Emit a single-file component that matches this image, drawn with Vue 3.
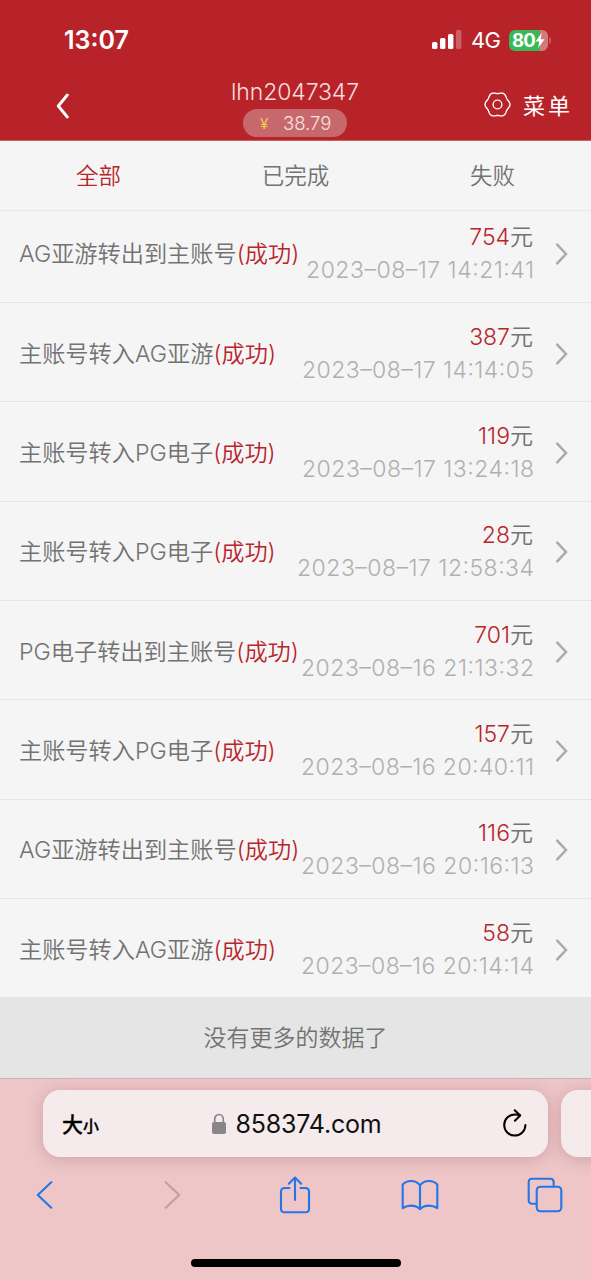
<script setup>
const rows = [
  { label: 'AG亚游转出到主账号', amount: '754', date: '2023–08–17', time: '14:21:41', w: 226 },
  { label: '主账号转入AG亚游', amount: '387', date: '2023–08–17', time: '14:14:05', w: 230 },
  { label: '主账号转入PG电子', amount: '119', date: '2023–08–17', time: '13:24:18', w: 230 },
  { label: '主账号转入PG电子', amount: '28', date: '2023–08–17', time: '12:58:34', w: 235 },
  { label: 'PG电子转出到主账号', amount: '701', date: '2023–08–16', time: '21:13:32', w: 231 },
  { label: '主账号转入PG电子', amount: '157', date: '2023–08–16', time: '20:40:11', w: 231 },
  { label: 'AG亚游转出到主账号', amount: '116', date: '2023–08–16', time: '20:16:13', w: 231 },
  { label: '主账号转入AG亚游', amount: '58', date: '2023–08–16', time: '20:14:14', w: 231 },
]

// Six-lobed outline of the settings icon.
const gear = Array.from({ length: 120 }, (_, i) => {
  const a = (i / 120) * Math.PI * 2
  const r = 11.7 + 0.75 * Math.cos(6 * a)
  return `${(13.5 + r * Math.cos(a)).toFixed(2)},${(13.5 + r * Math.sin(a)).toFixed(2)}`
}).join(' ')
</script>

<template>
  <div class="screen">
    <header class="top">
      <div class="status">
        <span class="clock">13:07</span>
        <div class="status-right">
          <svg class="signal" width="30" height="20" viewBox="0 0 30 20">
            <rect x="0" y="12" width="5.4" height="7" rx="1.5" fill="#fff" />
            <rect x="8" y="8" width="5.4" height="11" rx="1.5" fill="#fff" />
            <rect x="16" y="4" width="5.4" height="15" rx="1.5" fill="#fff" />
            <rect x="24" y="0" width="5.4" height="19" rx="1.5" fill="#fff" opacity=".28" />
          </svg>
          <span class="net">4G</span>
          <div class="battery">
            <span class="pct">80</span>
            <svg class="bolt" width="10" height="15" viewBox="0 0 9 15"><path d="M6.2 0 0 8.4h3.8L2.6 15 9 6.3H5.1Z" fill="#fff" /></svg>
          </div>
          <i class="nub"></i>
        </div>
      </div>
      <div class="nav">
        <div class="side">
          <svg width="14" height="26" viewBox="0 0 14 26"><path d="M11.3 2 2.3 13l9 11" fill="none" stroke="#fff" stroke-width="2.9" stroke-linecap="round" stroke-linejoin="round" /></svg>
        </div>
        <div class="account">
          <div class="user">lhn2047347</div>
          <div class="pill"><span class="yen">¥</span><span>38.79</span></div>
        </div>
        <div class="side menu">
          <svg width="27" height="27" viewBox="0 0 27 27" fill="none" stroke="#fff" stroke-width="1.35" stroke-linejoin="round">
            <polygon :points="gear" />
            <circle cx="13.5" cy="13.5" r="4.4" />
          </svg>
          <span>菜单</span>
        </div>
      </div>
    </header>

    <nav class="tabs">
      <span class="active">全部</span><span>已完成</span><span>失败</span>
    </nav>

    <main class="list">
      <div class="rows">
        <div v-for="(r, i) in rows" :key="i" class="row">
          <div class="label">{{ r.label }}<em>(成功)</em></div>
          <div class="value">
            <div class="amount"><em>{{ r.amount }}</em>元</div>
            <svg class="date" :width="r.w" height="34"><text x="-1" y="25" :textLength="r.w + 2" lengthAdjust="spacing">{{ r.date }} {{ r.time }}</text></svg>
          </div>
          <svg class="chev" width="14" height="24" viewBox="0 0 14 24"><path d="M2.2 2.6 11 12l-8.8 9.4" fill="none" stroke="#aaa" stroke-width="2.5" stroke-linecap="round" /></svg>
        </div>
      </div>
    </main>
    <div class="end">没有更多的数据了</div>

    <footer class="browser">
      <div class="bars">
        <div class="address">
          <span class="aa">大<small>小</small></span>
          <div class="host">
            <svg width="16" height="22" viewBox="0 0 16 22"><rect x="1" y="9" width="14" height="12" rx="2" fill="#88868b" /><path d="M3.7 10V6.2a4.3 4.7 0 0 1 8.6 0V10" fill="none" stroke="#88868b" stroke-width="1.7" /></svg>
            <span>858374.com</span>
          </div>
          <svg class="reload" width="26" height="30" viewBox="0 0 26 30" fill="none" stroke="#000" stroke-width="2" stroke-linecap="round" stroke-linejoin="round"><path d="M23.4 16A10.6 10.6 0 1 1 12.8 5.4q2.9 0 5 .8" /><path d="M12.7 1.3l5.5 5.2-5.3 5.3" /></svg>
        </div>
        <div class="next"></div>
      </div>
      <div class="tools">
        <svg width="17" height="28" viewBox="0 0 17 28"><path d="M15.3 1.3 1.8 14l13.5 12.7" class="blue" /></svg>
        <svg class="forward" width="17" height="28" viewBox="0 0 17 28"><path d="M1.7 1.3 15.2 14 1.7 26.7" class="blue dim" /></svg>
        <svg width="32" height="38" viewBox="0 0 32 38" class="blue"><path d="M10.5 12H5.7Q2 12 2 15.7v17Q2 36.3 5.7 36.3h20.6q3.7 0 3.7-3.6v-17Q30 12 26.3 12h-4.8" /><path d="M16 24V2M9.8 7.7 16 1.5l6.2 6.2" /></svg>
        <svg width="38" height="32" viewBox="0 0 38 32" class="blue"><path d="M19 6.3Q15.8 2 10.3 2 4.8 2 1.7 5.5V29.2Q5.2 26.6 10.3 26.6T19 30.2Q22.6 26.6 27.7 26.6T36.3 29.2V5.5Q33.2 2 27.7 2 22.2 2 19 6.3V30" /></svg>
        <svg width="36" height="36" viewBox="0 0 36 36" class="blue"><rect x="9.7" y="9.7" width="24.6" height="24.6" rx="3.7" /><path d="M9 26.7H5.2q-3.5 0-3.5-3.5v-18q0-3.5 3.5-3.5h18q3.5 0 3.5 3.5v4" /></svg>
      </div>
      <div class="home"></div>
    </footer>
  </div>
</template>

<style>
body { margin: 0; }
</style>

<style scoped>
.screen {
  width: 591px; height: 1280px; overflow: hidden; display: flex; flex-direction: column;
  background: #f5f5f5; color: #727272;
  font-family: Inter, "Noto Sans CJK SC", sans-serif; font-weight: 350;
}
em { font-style: normal; color: #b8252c; }
svg { display: block; flex: none; }
.top { height: 140px; flex: none; background: #b82329; border-bottom: 1px solid #c0646a; box-sizing: content-box; color: #fff; }
.status { height: 80px; display: flex; align-items: center; justify-content: space-between; padding: 0 40px 0 64px; }
.clock { font-size: 25px; font-weight: 600; letter-spacing: 0; }
.status-right { display: flex; align-items: center; }
.net { font-size: 22px; font-weight: 400; margin-left: 9px; width: 30px; letter-spacing: -.8px; }
.battery { margin-left: 8px; width: 39px; height: 21px; border-radius: 6px; background: linear-gradient(90deg, #38b955 0 31px, #d17b7d 31px); display: flex; align-items: center; box-sizing: border-box; padding-left: 3px; }
.pct { font-size: 18.5px; font-weight: 700; letter-spacing: -.8px; }
.nub { width: 2px; height: 7px; margin-left: 1px; border-radius: 0 2px 2px 0; background: #c9575c; }
.nav { height: 60px; display: flex; justify-content: space-between; }
.side { width: 160px; padding: 13px 0 0 56px; box-sizing: border-box; }
.account { display: flex; flex-direction: column; align-items: center; color: #f7dcdd; margin-right: 1px; }
.user { font-size: 23px; line-height: 28px; margin-top: -2px; letter-spacing: -.1px; font-weight: 300; }
.pill { width: 104px; height: 28px; margin-top: 3px; border-radius: 14px; background: #c6686c; display: flex; align-items: center; font-size: 18.5px; box-sizing: border-box; padding-left: 17px; color: #f8e1e1; font-weight: 300; }
.yen { color: #f4cb4b; font-size: 15px; font-weight: 400; width: 23px; }
.menu { display: flex; align-items: flex-start; padding: 11px 0 0 53px; font-size: 22px; line-height: 30px; font-weight: 400; letter-spacing: 3px; }
.menu span { margin-left: 12px; white-space: nowrap; }
.tabs { height: 69px; flex: none; border-bottom: 1px solid #e8e8e8; display: grid; grid-template-columns: repeat(3, 1fr); text-align: center; line-height: 69px; font-size: 22.5px; }
.tabs .active { color: #b8252c; }
.list { height: 787px; flex: none; overflow: hidden; }
.rows { margin-top: -7.4px; }
.row { height: 99.35px; box-sizing: border-box; border-bottom: 1px solid #e5e5e5; display: flex; align-items: center; padding: 3px 22px 0 19px; }
.label { flex: 1; min-width: 0; white-space: nowrap; font-size: 23.2px; padding-bottom: 4px; }
.value { width: 0; display: flex; flex-direction: column; align-items: flex-end; }
.amount { font-size: 23px; line-height: 32px; white-space: nowrap; }
.date { font-size: 23px; fill: #b0b0b0; overflow: visible; }
.chev { margin-left: 22px; }
.end { height: 80px; flex: none; background: #e5e5e5; line-height: 81px; text-align: center; font-size: 23px; }
.browser { flex: 1; background: #eec6c8; border-top: 1px solid #cdb2b4; display: flex; flex-direction: column; }
.bars { display: flex; gap: 13px; padding: 11px 0 0 43px; }
.address, .next { height: 67px; border-radius: 17px; background: #f5ebec; box-shadow: 0 2px 16px rgba(120, 50, 55, .25); }
.address { width: 505px; flex: none; display: flex; align-items: center; justify-content: space-between; box-sizing: border-box; padding: 0 20px 0 19px; color: #111; font-weight: 400; }
.next { width: 60px; flex: none; border-radius: 17px 0 0 17px; }
.aa { font-size: 21px; font-weight: 500; width: 50px; color: #000; -webkit-text-stroke: .3px #000; margin-top: -2px; }
.aa small { font-size: 16px; }
.host { display: flex; align-items: center; gap: 9px; font-size: 25px; letter-spacing: -.2px; margin-right: 22px; }
.tools { display: grid; grid-template-columns: repeat(5, 125.25px); justify-items: center; align-items: center; height: 38px; margin: 19px 0 0 -18.6px; }
.forward { margin-left: 6px; }
.blue { fill: none; stroke: #2575e6; stroke-width: 2.1; stroke-linecap: round; stroke-linejoin: round; }
.dim { stroke: #bda0a2; }
.home { width: 210px; height: 8px; border-radius: 4px; background: #000; margin: 45px auto 0; }
</style>
